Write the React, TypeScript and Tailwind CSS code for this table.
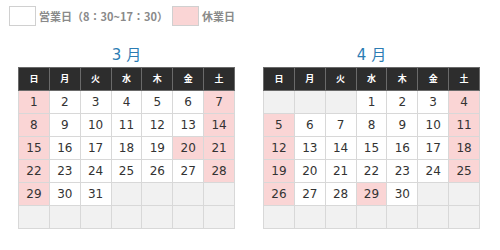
import React from 'react';

type Cell = { d?: number; off?: boolean };

const week = ['日', '月', '火', '水', '木', '金', '土'];

const build = (start: number, days: number, offs: number[]): Cell[][] => {
	const cells: Cell[] = [];
	for (let i = 0; i < start; i++) cells.push({});
	for (let d = 1; d <= days; d++) {
		const dow = (start + d - 1) % 7;
		cells.push({ d, off: dow === 0 || dow === 6 || offs.includes(d) });
	}
	while (cells.length < 42) cells.push({});
	const rows: Cell[][] = [];
	for (let r = 0; r < 6; r++) rows.push(cells.slice(r * 7, r * 7 + 7));
	return rows;
};

const months = [
	{ label: '3', rows: build(0, 31, [20]) },
	{ label: '4', rows: build(3, 30, [29]) },
];

const Calendar = ({ label, rows }: { label: string; rows: Cell[][] }) => (
	<div className="w-[217px]">
		<h2 className="text-center text-[15px] leading-[20px] text-[#2b7cb3] font-['DejaVu_Sans','Noto_Sans_CJK_JP',sans-serif] mb-[2px]">
			{label} 月
		</h2>
		<table className="w-[217px] border-collapse table-fixed">
			<thead>
				<tr>
					{week.map((w) => (
						<th
							key={w}
							className="h-[23px] bg-[#2d2d2d] border border-[#6a6a6a] text-[9px] font-bold text-white font-['Noto_Sans_CJK_JP',sans-serif]"
						>
							{w}
						</th>
					))}
				</tr>
			</thead>
			<tbody>
				{rows.map((row, i) => (
					<tr key={i}>
						{row.map((c, j) => (
							<td
								key={j}
								className={`h-[23px] p-0 border border-[#d8d8d8] text-center text-[12px] text-[#333] font-['DejaVu_Sans',sans-serif] ${
									c.d === undefined ? 'bg-[#f1f1f1]' : c.off ? 'bg-[#fad5d5]' : 'bg-white'
								}`}
							>
								{c.d ?? ''}
							</td>
						))}
					</tr>
				))}
			</tbody>
		</table>
	</div>
);

export default function App() {
	return (
		<div className="w-[500px] h-[250px] bg-white font-['Noto_Sans_CJK_JP',sans-serif]">
			<div className="flex items-center pl-[9px] pt-[6px] text-[11px] font-bold text-[#8a8a8a]">
				<span className="w-[27px] h-[20px] border border-[#d0d0d0] bg-white" />
				<span className="ml-[3px]">営業日（8：30~17：30）</span>
				<span className="ml-[4px] w-[27px] h-[20px] border border-[#d0d0d0] bg-[#fad5d5]" />
				<span className="ml-[3px]">休業日</span>
			</div>
			<div className="flex pl-[18px] pt-[19px] gap-[28px]">
				{months.map((m) => (
					<Calendar key={m.label} label={m.label} rows={m.rows} />
				))}
			</div>
		</div>
	);
}
